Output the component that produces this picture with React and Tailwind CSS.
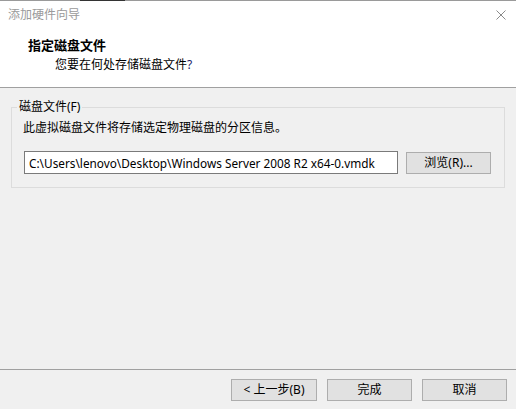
export default function App() {
  const font = { fontFamily: '"Noto Sans", "Noto Sans CJK SC", sans-serif' };
  return (
    <div
      className="w-[516px] h-[409px] bg-[#f0f0f0] flex flex-col overflow-hidden text-[12px] text-black"
      style={font}
    >
      <div className="h-px flex shrink-0">
        <div className="w-[80px] bg-[#9a9a9a]" />
        <div className="w-[45px] bg-[#333333]" />
        <div className="flex-1 bg-[#9a9a9a]" />
      </div>
      <div className="h-[86px] bg-white flex flex-col shrink-0">
        <div className="h-[28px] flex items-center justify-between pl-[8px] pr-[10px]">
          <span className="text-[#9a9a9a] leading-[16px]">添加硬件向导</span>
          <svg width="10" height="10" viewBox="0 0 10 10">
            <path d="M0.5 0.5 L9.5 9.5 M9.5 0.5 L0.5 9.5" stroke="#8a8a8a" strokeWidth="1" />
          </svg>
        </div>
        <div className="mt-[8px] pl-[28px] leading-[16px] font-bold text-[13px]">指定磁盘文件</div>
        <div className="mt-[4px] pl-[55px] leading-[16px]">
          您要在何处存储磁盘文件<span className="text-[#1a1a6a]">?</span>
        </div>
      </div>
      <div className="h-px bg-[#a0a0a0] shrink-0" />
      <div className="flex-1 pt-[11px]">
        <fieldset className="mx-[11px] h-[89px] border border-[#dcdcdc] pl-[11px] pr-[13px] pt-[5px]">
          <legend className="-ml-[6px] px-[2px] leading-[16px]">磁盘文件(F)</legend>
          <div className="leading-[16px]">此虚拟磁盘文件将存储选定物理磁盘的分区信息。</div>
          <div className="mt-[15px] flex items-start gap-[8px] ml-px">
            <div className="w-[374px] h-[23px] bg-white border border-[#7a7a7a] flex items-center pl-[4px] leading-[16px] text-[11.8px] whitespace-nowrap overflow-hidden">
              C:\Users\lenovo\Desktop\Windows Server 2008 R2 x64-0.vmdk
            </div>
            <button className="mt-px w-[85px] h-[22px] bg-[#e1e1e1] border border-[#adadad] flex items-center justify-center leading-[16px]">
              浏览(R)...
            </button>
          </div>
        </fieldset>
      </div>
      <div className="h-px bg-[#a0a0a0] shrink-0" />
      <div className="h-[39px] shrink-0 flex justify-end items-start gap-[10px] pr-[9px] pt-[9px]">
        <button className="w-[86px] h-[22px] bg-[#e1e1e1] border border-[#adadad] flex items-center justify-center leading-[16px]">
          &lt; 上一步(B)
        </button>
        <button className="w-[85px] h-[22px] bg-[#e1e1e1] border border-[#adadad] flex items-center justify-center leading-[16px]">
          完成
        </button>
        <button className="w-[85px] h-[22px] bg-[#e1e1e1] border border-[#adadad] flex items-center justify-center leading-[16px]">
          取消
        </button>
      </div>
    </div>
  );
}
